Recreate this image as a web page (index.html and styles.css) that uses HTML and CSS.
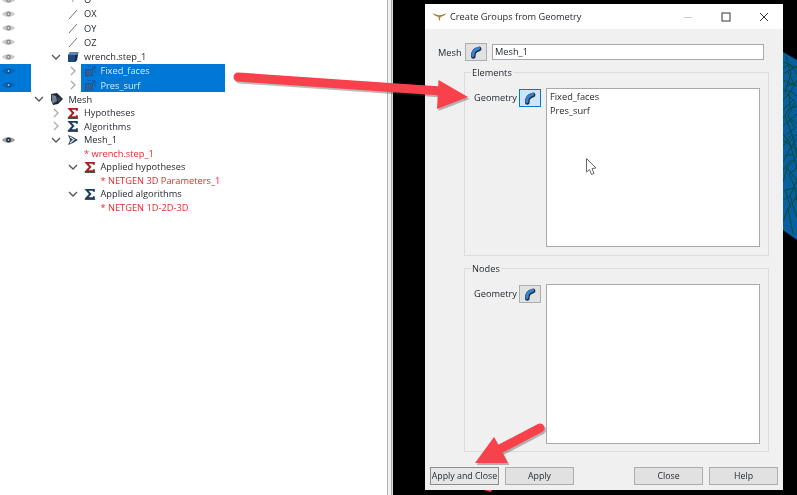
FILE: index.html
```html
<!DOCTYPE html>
<html lang="en">
<head>
<meta charset="utf-8">
<title>Create Groups from Geometry</title>
<link rel="stylesheet" href="styles.css">
</head>
<body>
<svg class="defs" width="0" height="0" aria-hidden="true">
  <defs>
    <symbol id="eye" viewBox="0 0 16 10">
      <path d="M1 5C4 1 12 1 15 5C12 9 4 9 1 5Z" fill="currentColor" opacity=".45"/>
      <circle cx="8" cy="5" r="2.6" fill="currentColor"/>
      <circle cx="8" cy="5" r="1" fill="#fff" opacity=".7"/>
    </symbol>
    <symbol id="down" viewBox="0 0 10 10"><path d="M1 3L5 7L9 3" fill="none" stroke="#555" stroke-width="1.3"/></symbol>
    <symbol id="right" viewBox="0 0 10 10"><path d="M3 1L7 5L3 9" fill="none" stroke="#aaa" stroke-width="1.3"/></symbol>
    <symbol id="line" viewBox="0 0 12 12"><path d="M2 11L10 2" stroke="#777" stroke-width="1" fill="none"/></symbol>
    <symbol id="cube" viewBox="0 0 12 12">
      <path d="M1 4L3 1H11.500L10 9L8 11H1Z" fill="#1c4a7c"/>
      <path d="M3 1H11.500L10 4H1Z" fill="#5d83ad"/>
      <path d="M8 4H10.500L10 9L8 11Z" fill="#0f2b4c"/>
    </symbol>
    <symbol id="group" viewBox="0 0 12 12">
      <path d="M1.500 4.500H8.500V11H1.500Z" fill="#2b5f98" stroke="#174a82" stroke-dasharray="1 1"/>
      <path d="M4 1.500H11V8" fill="none" stroke="#174a82" stroke-dasharray="1 1"/>
      <path d="M8.500 4.500L11 1.500" stroke="#174a82"/>
    </symbol>
    <symbol id="meshroot" viewBox="0 0 14 14">
      <path d="M1 2L7 1L13 7L8 12L3 13L1 8Z" fill="#20262e"/>
      <path d="M1.500 2.500L6 4L7 9L2.500 12Z" fill="#6f8296"/>
      <path d="M7 5L12 7L8 10Z" fill="#3b4755"/>
    </symbol>
    <symbol id="sigma" viewBox="-1 -1 14 14">
      <path d="M10.500 3.500V1.200H2L6.300 6L2 10.800H10.500V8.500" fill="none" stroke="currentColor" stroke-width="2.300"/>
      <path d="M0 12.500H12" stroke="#222" stroke-width="1"/>
    </symbol>
    <symbol id="meshitem" viewBox="0 0 12 12">
      <path d="M1 1L6 3L11 6L6 9L1 11L3 6Z" fill="#33475c"/>
      <path d="M3 3L7 5.500L3 9" fill="none" stroke="#dfe7ef" stroke-width="1.100"/>
    </symbol>
    <symbol id="pipe" viewBox="0 0 22 18">
      <path d="M8 14C7.500 9.500 10 6.500 14.500 5.500" fill="none" stroke="#15304d" stroke-width="5.200" stroke-linecap="round"/>
      <path d="M7.600 13.200C7.200 9 9.800 6 14 4.800" fill="none" stroke="#3a82cc" stroke-width="3.200" stroke-linecap="round"/>
    </symbol>
  </defs>
</svg>

<div class="screen">
  <section class="tree">
    <div class="group-top">
      <div class="row"><span class="eye"><svg class="eye-i"><use href="#eye"/></svg></span><span class="indent l1"></span><span class="chev"></span><span class="name n1"><span class="icon plus">+</span><span>O</span></span></div>
      <div class="row"><span class="eye"><svg class="eye-i"><use href="#eye"/></svg></span><span class="indent l1"></span><span class="chev"></span><span class="name n1"><span class="icon"><svg class="i12"><use href="#line"/></svg></span><span>OX</span></span></div>
      <div class="row"><span class="eye"><svg class="eye-i"><use href="#eye"/></svg></span><span class="indent l1"></span><span class="chev"></span><span class="name n1"><span class="icon"><svg class="i12"><use href="#line"/></svg></span><span>OY</span></span></div>
      <div class="row"><span class="eye"><svg class="eye-i"><use href="#eye"/></svg></span><span class="indent l1"></span><span class="chev"></span><span class="name n1"><span class="icon"><svg class="i12"><use href="#line"/></svg></span><span>OZ</span></span></div>
      <div class="row"><span class="eye"><svg class="eye-i"><use href="#eye"/></svg></span><span class="indent l1"></span><span class="chev"><svg class="i10"><use href="#down"/></svg></span><span class="name n1"><span class="icon"><svg class="i12"><use href="#cube"/></svg></span><span>wrench.step_1</span></span></div>
      <div class="row selected"><span class="eye"><svg class="eye-i"><use href="#eye"/></svg></span><span class="indent l2"></span><span class="chev"><svg class="i10"><use href="#right"/></svg></span><span class="name n2"><span class="icon"><svg class="i12"><use href="#group"/></svg></span><span>Fixed_faces</span></span></div>
      <div class="row selected"><span class="eye"><svg class="eye-i"><use href="#eye"/></svg></span><span class="indent l2"></span><span class="chev"><svg class="i10"><use href="#right"/></svg></span><span class="name n2"><span class="icon"><svg class="i12"><use href="#group"/></svg></span><span>Pres_surf</span></span></div>
    </div>
    <div class="group-bottom">
      <div class="row"><span class="eye"></span><span class="indent l0"></span><span class="chev"><svg class="i10"><use href="#down"/></svg></span><span class="name n0"><span class="icon"><svg class="i14"><use href="#meshroot"/></svg></span><span>Mesh</span></span></div>
      <div class="row"><span class="eye"></span><span class="indent l1"></span><span class="chev"><svg class="i10"><use href="#right"/></svg></span><span class="name n1"><span class="icon"><svg class="i12 hyp"><use href="#sigma"/></svg></span><span>Hypotheses</span></span></div>
      <div class="row"><span class="eye"></span><span class="indent l1"></span><span class="chev"><svg class="i10"><use href="#right"/></svg></span><span class="name n1"><span class="icon"><svg class="i12 alg"><use href="#sigma"/></svg></span><span>Algorithms</span></span></div>
      <div class="row"><span class="eye dark"><svg class="eye-i"><use href="#eye"/></svg></span><span class="indent l1"></span><span class="chev"><svg class="i10"><use href="#down"/></svg></span><span class="name n1"><span class="icon"><svg class="i12"><use href="#meshitem"/></svg></span><span>Mesh_1</span></span></div>
      <div class="row red"><span class="eye"></span><span class="indent l1"></span><span class="chev"></span><span class="name n1 bare"><span>* wrench.step_1</span></span></div>
      <div class="row"><span class="eye"></span><span class="indent l2"></span><span class="chev"><svg class="i10"><use href="#down"/></svg></span><span class="name n2"><span class="icon"><svg class="i12 hyp"><use href="#sigma"/></svg></span><span>Applied hypotheses</span></span></div>
      <div class="row red"><span class="eye"></span><span class="indent l2"></span><span class="chev"></span><span class="name n2 bare"><span>* NETGEN 3D Parameters_1</span></span></div>
      <div class="row"><span class="eye"></span><span class="indent l2"></span><span class="chev"><svg class="i10"><use href="#down"/></svg></span><span class="name n2"><span class="icon"><svg class="i12 alg"><use href="#sigma"/></svg></span><span>Applied algorithms</span></span></div>
      <div class="row red"><span class="eye"></span><span class="indent l2"></span><span class="chev"></span><span class="name n2 bare"><span>* NETGEN 1D-2D-3D</span></span></div>
    </div>
  </section>

  <div class="splitter"></div>

  <section class="viewport">
    <svg class="mesh3d" viewBox="0 0 14 190" aria-hidden="true">
      <path d="M0 2L14 10V190L0 180Z" fill="#06609f"/>
      <g fill="none" stroke="#0d4a38" stroke-width="1">
        <path d="M0 12L14 18M0 24L14 16M0 30L14 36M3 6L8 24L2 42L12 52L5 66L14 74M14 30L6 44L0 50M0 60L10 50M0 76L14 64M2 66L9 84L0 96M14 88L6 100L0 112M9 84L14 106L4 118L0 132M4 118L14 130L7 146L0 150M14 146L5 158L0 172M7 146L14 168M5 158L10 184M0 90L14 100"/>
        <path d="M0 18L7 14L14 24M5 22L11 34L3 36M0 40L9 42L14 46M6 44L7 58L14 56M0 68L7 58M5 66L12 78L4 84M0 84L6 92L14 84M6 92L10 104L2 106M10 104L14 118L6 124M0 120L8 110M6 124L12 138L2 140M12 138L14 152M2 140L8 158"/>
      </g>
    </svg>

    <div class="dialog">
      <header class="titlebar">
        <svg class="wing" viewBox="0 0 16 10" aria-hidden="true">
          <path d="M0 1.500C4 3 6 3.500 8 3.500C10 3.500 12 3 16 1.500C13 4.500 11 5 9 5.500L8.500 9.500L7.500 9.500L7 5.500C5 5 3 4.500 0 1.500Z" fill="#a9822f"/>
        </svg>
        <span class="title">Create Groups from Geometry</span>
        <span class="controls">
          <svg class="ctl" viewBox="0 0 10 10"><path d="M1 5.500H9" stroke="#ccc"/></svg>
          <svg class="ctl" viewBox="0 0 10 10"><rect x="1" y="1" width="8" height="8" fill="none" stroke="#333"/></svg>
          <svg class="ctl" viewBox="0 0 10 10"><path d="M1 1L9 9M9 1L1 9" stroke="#333"/></svg>
        </span>
      </header>
      <div class="body">
        <div class="mesh-row">
          <span class="mesh-label">Mesh</span>
          <button class="icon-btn" type="button"><svg class="pipe"><use href="#pipe"/></svg></button>
          <div class="field">Mesh_1</div>
        </div>

        <div class="gbox">
          <div class="legend">Elements</div>
          <div class="gbox-row">
            <span class="geo-label">Geometry</span>
            <button class="icon-btn active" type="button"><svg class="pipe"><use href="#pipe"/></svg></button>
            <div class="list"><div>Fixed_faces</div><div>Pres_surf</div></div>
          </div>
        </div>

        <div class="gbox second">
          <div class="legend">Nodes</div>
          <div class="gbox-row">
            <span class="geo-label">Geometry</span>
            <button class="icon-btn" type="button"><svg class="pipe"><use href="#pipe"/></svg></button>
            <div class="list tall"></div>
          </div>
        </div>

        <footer class="footer">
          <button class="btn hovered" type="button">Apply and Close</button>
          <button class="btn" type="button">Apply</button>
          <span class="spring"></span>
          <button class="btn" type="button">Close</button>
          <button class="btn" type="button">Help</button>
        </footer>
      </div>
    </div>
  </section>

  <svg class="overlay" viewBox="0 0 797 495" aria-hidden="true">
    <g class="arrow-shadow" transform="translate(1.500 2)">
      <path d="M238 77L441 91" stroke-width="9" stroke-linecap="round" fill="none"/>
      <path d="M468 97L438.500 80L437 109Z"/>
      <path d="M540 428L498 450" stroke-width="9" stroke-linecap="round" fill="none"/>
      <path d="M475 463L494 437L508 463Z"/>
    </g>
    <g class="arrow">
      <path d="M238 77L441 91" stroke-width="9" stroke-linecap="round" fill="none"/>
      <path d="M468 97L438.500 80L437 109Z"/>
      <path d="M540 428L498 450" stroke-width="9" stroke-linecap="round" fill="none"/>
      <path d="M475 463L494 437L508 463Z"/>
      <path d="M484 490L492 490L491 492Z"/>
    </g>
    <path class="cursor" d="M586.500 158.500V172L589.500 169.500L591.500 174.500L594 173.500L592 168.500L596 168Z"/>
  </svg>
</div>
</body>
</html>
```

FILE: styles.css
```css
* { box-sizing: border-box; }
html, body { margin: 0; height: 100%; overflow: hidden; }
body { background: #000; font-family: "Open Sans", "Noto Sans", "Liberation Sans", sans-serif; font-size: 9.25px; color: #1f242b; }
.defs { position: absolute; }

.screen { position: relative; display: flex; width: 797px; height: 495px; overflow: hidden; filter: blur(.45px); }

/* object browser */
.tree { width: 387px; background: #fff; overflow: hidden; flex: none; }
.group-top { margin-top: -7.4px; }
.group-top .row { height: 14.25px; }
.group-bottom { margin-top: .3px; }
.group-bottom .row { height: 13.5px; }
.row { display: flex; align-items: center; white-space: nowrap; }
.eye { display: flex; align-items: center; width: 31px; height: 100%; flex: none; padding-left: 1px; color: #8f8f8f; }
.eye.dark { color: #1f2c36; }
.eye-i { width: 15px; height: 10px; }
.indent { flex: none; }
.l0 { width: 0; }
.l1 { width: 17px; }
.l2 { width: 34px; }
.chev { display: flex; align-items: center; justify-content: center; width: 16px; flex: none; }
.i10 { width: 10px; height: 10px; }
.i12 { width: 12px; height: 12px; }
.i14 { width: 14px; height: 14px; }
.name { display: flex; align-items: center; height: 100%; }
.icon { display: flex; align-items: center; justify-content: center; flex: none; width: 20px; padding-right: 2px; }
.n0 .icon { width: 21.500px; }
.n2 .icon { width: 19.500px; }
.bare { padding-left: 20px; }
.n2.bare { padding-left: 19.500px; }
.plus { color: #666; }
.selected .eye { background: #0078d7; color: #0a4f96; }
.selected .name { width: 144px; background: #0078d7; color: #d9e9f8; }
.red { color: #e9282b; }
.hyp { color: #a51e22; }
.alg { color: #1c3d63; }

.splitter { width: 6px; flex: none; background: linear-gradient(90deg, #b4b4b4 0 1px, #f0f0f0 1px 4px, #a8a8a8 4px 5px, #ddd 5px); }

/* 3D viewport */
.viewport { position: relative; flex: 1; background: #000; }
.mesh3d { position: absolute; right: 0; top: 50px; width: 14px; height: 190px; }

/* dialog window */
.dialog { position: absolute; left: 32px; top: 4px; width: 358px; height: 486px; display: flex; flex-direction: column; background: #f0f0f0; }
.titlebar { display: flex; align-items: center; height: 25px; flex: none; background: #fff; padding-left: 7px; }
.wing { width: 15px; height: 9px; margin-right: 3px; }
.controls { display: flex; align-items: center; gap: 28px; margin-left: auto; margin-right: 14px; }
.ctl { width: 10px; height: 10px; }
.body { display: flex; flex-direction: column; flex: 1; padding: 14px 5px 5px; }

.mesh-row { display: flex; align-items: center; height: 18px; padding-left: 8px; }
.mesh-label { width: 27px; flex: none; }
.icon-btn { display: flex; align-items: center; justify-content: center; width: 22px; height: 18px; padding: 0; flex: none; background: #e1e1e1; border: 1px solid #adadad; }
.icon-btn.active { background: #cfe4f7; border-color: #0078d7; }
.pipe { width: 20px; height: 16px; }
.field { flex: none; width: 272px; height: 16px; margin-left: 5px; padding: 0 2px; line-height: 14px; background: #fff; border: 1px solid #a9a9a9; }

.gbox { height: 184px; margin: 11px 9px 0 34px; border: 1px solid #dcdcdc; }
.gbox.second { margin-top: 12px; }
.legend { width: fit-content; height: 14px; margin: -7px 0 0 6px; padding: 0 1px; line-height: 14px; background: #f0f0f0; }
.gbox-row { display: flex; align-items: flex-start; margin-top: 8px; padding-left: 9px; }
.geo-label { width: 45px; flex: none; line-height: 20px; }
.gbox-row .icon-btn { margin-top: 1px; }
.list { width: 214px; height: 159px; margin-left: 5px; padding: 1px 3px; line-height: 14px; background: #fff; border: 1px solid #a9a9a9; }
.list.tall { height: 160px; }

.footer { display: flex; gap: 6px; margin-top: auto; height: 18px; }
.btn { width: 69px; height: 18px; padding: 0; font: inherit; font-size: 8.8px; color: inherit; background: #e1e1e1; border: 1px solid #adadad; white-space: nowrap; }
.btn.hovered { background: #e6e6e6; border-color: #8d8d8d; }
.spring { flex: 1; }

/* annotations */
.overlay { position: absolute; left: 0; top: 0; width: 797px; height: 495px; }
.arrow { fill: #f8414a; stroke: #f8414a; stroke-width: 0; }
.arrow path[fill="none"] { stroke-width: 9; }
.arrow-shadow { fill: rgba(60, 60, 60, .35); stroke: rgba(60, 60, 60, .35); stroke-width: 0; }
.arrow-shadow path[fill="none"] { stroke-width: 9; }
.cursor { fill: #fff; stroke: #666; stroke-width: 1; }
```
